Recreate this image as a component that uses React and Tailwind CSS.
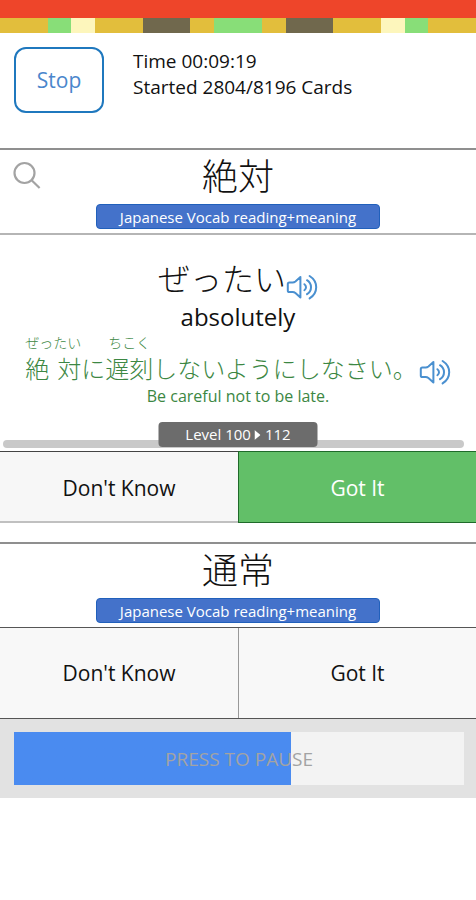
const STRIPES = [
  ["y", 2], ["g", 1], ["c", 1], ["y", 2], ["b", 2], ["y", 1], ["g", 2],
  ["y", 1], ["b", 2], ["y", 2], ["c", 1], ["g", 1], ["y", 2],
];
const STRIPE_COLOR = {
  y: "bg-[#e2be3c]",
  g: "bg-[#88de78]",
  c: "bg-[#fdf6bc]",
  b: "bg-[#70684d]",
};

function Banner() {
  return (
    <header>
      <div className="h-[18px] bg-[#ee452a]" />
      <div className="flex h-[15px]">
        {STRIPES.map(([color, span], i) => (
          <div key={i} className={`basis-0 ${STRIPE_COLOR[color]}`} style={{ flexGrow: span }} />
        ))}
      </div>
    </header>
  );
}

function SpeakerButton({ label }) {
  return (
    <button type="button" aria-label={label} className="h-[26px] w-[32px] shrink-0">
      <svg viewBox="0 0 32 26" className="h-full w-full" fill="none" stroke="#4a90d0" strokeWidth="2" strokeLinecap="round" strokeLinejoin="round">
        <path d="M1.800 10q0-1.600 1.600-1.600h3.200q1.600 0 2.800-1L14.400 3v20.400l-5-4.400q-1.200-1-2.800-1H3.400q-1.600 0-1.600-1.600z" />
        <path d="M18.400 10.200q1.600 1.200 1.600 3t-1.600 3" />
        <path d="M21 6.200q4 2.600 4 7t-4 7" />
        <path d="M23.600 2q6.600 4.200 6.600 11.200t-6.600 11.200" />
      </svg>
    </button>
  );
}

function SearchButton() {
  return (
    <button type="button" aria-label="Search" className="absolute left-[13px] top-[11px] h-[28px] w-[28px]">
      <svg viewBox="0 0 28 28" className="h-full w-full" fill="none" stroke="#a3a3a3" strokeWidth="2.200">
        <circle cx="11.500" cy="12" r="10" />
        <path d="M18.600 19.200 26.600 27" />
      </svg>
    </button>
  );
}

function Furigana({ base, reading }) {
  return (
    <ruby className="inline-flex flex-col-reverse items-stretch">
      <span className="[text-align-last:justify]">{base}</span>
      <rt className="text-center text-[14px] leading-[20px]">{reading}</rt>
    </ruby>
  );
}

function CardHead({ word, children }) {
  return (
    <div className="relative flex h-[83px] flex-col items-center bg-white">
      {children}
      <h2 className="mt-[3px] text-[36px] font-light leading-[48px]">{word}</h2>
      <p className="mt-[3px] h-[25px] w-[284px] rounded border border-[#2160bb] bg-[#4472ca] text-center text-[15px] leading-[24px] text-white">
        Japanese Vocab reading+meaning
      </p>
    </div>
  );
}

export default function App() {
  return (
    <main
      lang="ja"
      className="min-h-screen bg-white font-['Open_Sans','Noto_Sans_CJK_JP',sans-serif] text-[#111]"
    >
      <Banner />

      <section className="flex h-[115px] items-start pl-[14px] pt-[14px]">
        <button type="button" className="h-[66px] w-[90px] shrink-0 rounded-xl border-2 border-[#1f78be] pt-[2px] text-[21px] text-[#4a86cc]">
          Stop
        </button>
        <div className="ml-[29px] pt-px text-[19px] leading-[26px]">
          <p>Time 00:09:19</p>
          <p>Started 2804/8196 Cards</p>
        </div>
      </section>

      <section className="border-t-2 border-[#8f8f8f]">
        <CardHead word="絶対">
          <SearchButton />
        </CardHead>

        <div className="relative h-[218px] border-t-2 border-[#b5b5b5] pt-[22px]">
          <div className="flex h-[44px] items-center justify-center text-[32px] font-light leading-[44px]">
            <span>ぜったい</span>
            <span className="flex pt-4">
              <SpeakerButton label="Play word" />
            </span>
          </div>
          <p className="text-center text-[24px] leading-[32px]">absolutely</p>
          <div className="flex items-end justify-center gap-[2px] text-[#3c8743]">
            <p className="flex items-end whitespace-nowrap text-[24px] font-light leading-[32px]">
              <Furigana base="絶対" reading="ぜったい" />
              <span>に</span>
              <Furigana base="遅刻" reading="ちこく" />
              <span>しないようにしなさい。</span>
            </p>
            <SpeakerButton label="Play sentence" />
          </div>
          <p className="text-center text-[16px] leading-[22px] text-[#3c8743]">Be careful not to be late.</p>

          <div className="absolute bottom-[3px] left-[3px] right-[12px] h-[8px] rounded-full bg-[#c9c9c9]" />
          <p className="absolute bottom-1 left-1/2 flex h-[25px] w-[159px] -translate-x-1/2 items-center justify-center rounded bg-[#6c6c6c] text-[15px] text-white">
            Level 100
            <svg viewBox="0 0 6 10" className="mx-1 h-[10px] w-[6px]" fill="currentColor"><path d="M0 0 6 5 0 10z" /></svg>
            112
          </p>
        </div>

        <div className="grid h-[72px] grid-cols-2 text-[21px]">
          <button type="button" className="border-b-2 border-t border-b-[#c0c0c0] border-t-[#444] bg-[#f7f7f7] pt-1">Don't Know</button>
          <button type="button" className="border border-r-0 border-[#1f6a2a] bg-[#62bf68] pt-[3px] text-white">Got It</button>
        </div>
      </section>

      <section className="mt-[19px] border-t-2 border-[#8f8f8f]">
        <CardHead word="通常" />
        <div className="grid h-[92px] grid-cols-2 border-y border-[#555] text-[21px]">
          <button type="button" className="bg-[#f8f8f8] pt-[2px]">Don't Know</button>
          <button type="button" className="border-l border-[#999] bg-[#f8f8f8] pt-[2px]">Got It</button>
        </div>
      </section>

      <footer className="bg-[#e2e2e2] py-[13px] pl-[14px] pr-[12px]">
        <button type="button" className="block h-[53px] w-full bg-[#f3f3f3] bg-linear-to-r from-[#4a8bf0] from-[61.6%] to-transparent to-[61.6%] pt-[2px] text-[19px] text-[#a3a3a3]">
          PRESS TO PAUSE
        </button>
      </footer>
    </main>
  );
}
